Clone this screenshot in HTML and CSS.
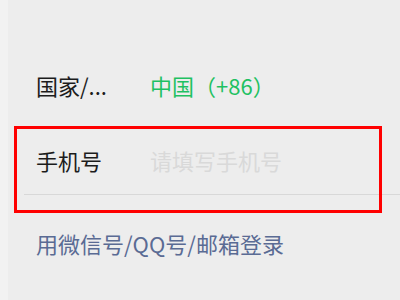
FILE: index.html
```html
<!DOCTYPE html>
<html lang="zh">
<head>
<meta charset="utf-8">
<link rel="stylesheet" href="styles.css">
</head>
<body>
<div class="page">
  <div class="edge"></div>
  <div class="main">
    <div class="row region">
      <span class="label">国家/...</span>
      <span class="value">中国（+86）</span>
    </div>
    <div class="row phone">
      <span class="label">手机号</span>
      <span class="placeholder">请填写手机号</span>
    </div>
    <div class="link">用微信号/QQ号/邮箱登录</div>
  </div>
  <div class="highlight"></div>
</div>
</body>
</html>
```

FILE: styles.css
```css
html, body {
  margin: 0;
  padding: 0;
}
body {
  background: #ededed;
  font-family: "Noto Sans CJK SC", "Noto Sans", sans-serif;
  font-size: 22px;
  width: 400px;
  height: 300px;
  overflow: hidden;
}
.page {
  position: relative;
  display: flex;
  width: 400px;
  height: 300px;
}
.edge {
  width: 8px;
  background: #f2f2f2;
}
.main {
  flex: 1;
  padding-top: 73px;
}
.row {
  display: flex;
  line-height: 24px;
}
.label {
  width: 114px;
  color: #1c1c1c;
}
.region {
  padding-left: 28px;
}
.value {
  color: #1fc162;
}
.phone {
  margin-top: 51px;
  margin-left: 16px;
  padding-left: 12px;
  padding-bottom: 22px;
  border-bottom: 1px solid #d8d8d8;
}
.placeholder {
  color: #d9d9d9;
}
.link {
  margin-top: 36px;
  padding-left: 28px;
  line-height: 24px;
  color: #5a6b94;
}
.highlight {
  position: absolute;
  left: 14px;
  top: 126px;
  width: 362px;
  height: 81px;
  border: 3px solid #ff0000;
}
```
